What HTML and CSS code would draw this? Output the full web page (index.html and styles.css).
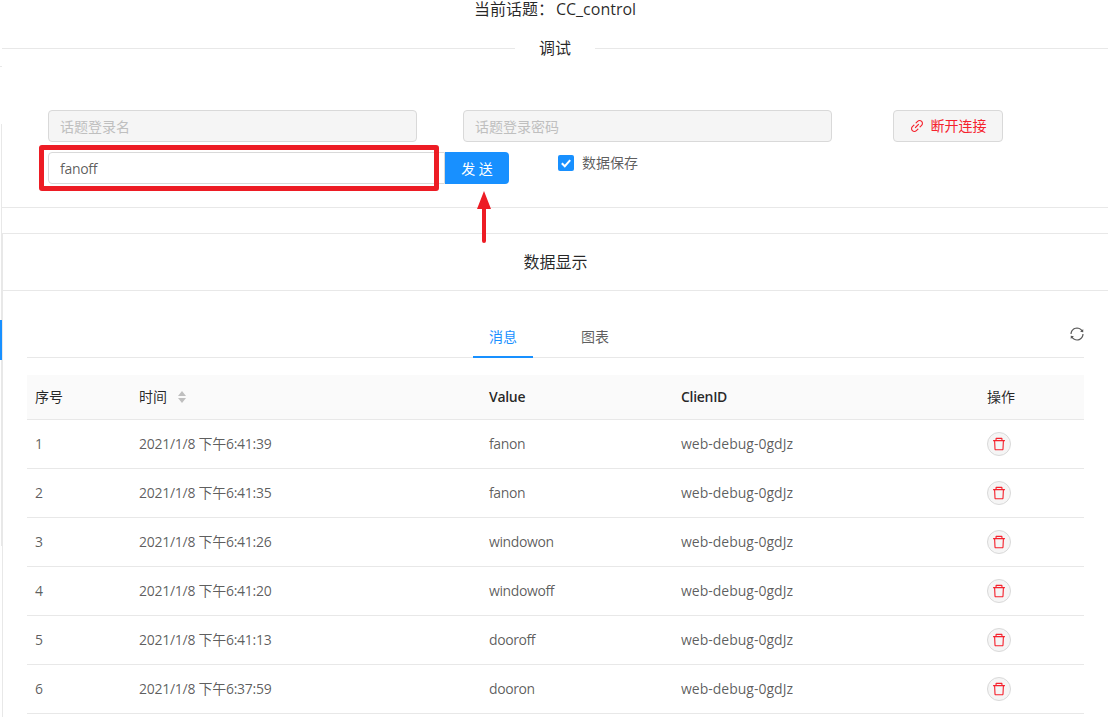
FILE: index.html
```html
<!DOCTYPE html>
<html>
<head>
    <meta charset="utf-8">
    <title>调试</title>
    <link rel="stylesheet" href="styles.css">
</head>
<body>
    <div class="page">
        <div class="rail">
            <div class="rail-tick"></div>
            <div class="rail-bar">
                <div class="rail-active"></div>
            </div>
            <div class="rail-rest"></div>
        </div>

        <div class="main">
            <div class="topic">当前话题：<span class="topic-name">CC_control</span></div>

            <div class="divider">
                <span class="divider-text">调试</span>
            </div>

            <form class="debug-form">
                <div class="form-row">
                    <input class="text-input login-input" type="text" placeholder="话题登录名" disabled>
                    <input class="text-input login-input" type="text" placeholder="话题登录密码" disabled>
                    <button class="disconnect-button" type="button">
                        <svg class="link-icon" viewBox="64 64 896 896" fill="currentColor"><path d="M574 665.4a8.03 8.03 0 0 0-11.3 0L446.5 781.6c-53.8 53.8-144.6 59.5-204 0-59.5-59.5-53.8-150.2 0-204l116.2-116.2c3.1-3.1 3.1-8.2 0-11.3l-39.8-39.8a8.03 8.03 0 0 0-11.3 0L191.4 526.5c-84.6 84.6-84.6 221.5 0 306s221.5 84.6 306 0l116.2-116.2c3.1-3.1 3.1-8.2 0-11.3L574 665.4zm258.6-474c-84.6-84.6-221.5-84.6-306 0L410.3 307.6a8.03 8.03 0 0 0 0 11.3l39.7 39.7c3.1 3.1 8.2 3.1 11.3 0l116.2-116.2c53.8-53.8 144.6-59.5 204 0 59.5 59.5 53.8 150.2 0 204L665.3 562.6a8.03 8.03 0 0 0 0 11.3l39.8 39.8c3.1 3.1 8.2 3.1 11.3 0l116.2-116.2c84.5-84.6 84.5-221.5 0-306.1zM610.1 372.3a8.03 8.03 0 0 0-11.3 0L372.3 598.7a8.03 8.03 0 0 0 0 11.3l39.6 39.6c3.1 3.1 8.2 3.1 11.3 0l226.4-226.4c3.1-3.1 3.1-8.2 0-11.3l-39.5-39.6z"/></svg>
                        断开连接
                    </button>
                </div>
                <div class="form-row send-row">
                    <input class="text-input send-input" type="text" value="fanoff">
                    <button class="send-button" type="button">发 送</button>
                    <label class="save-check">
                        <span class="check-box">
                            <svg viewBox="0 0 16 16"><path d="M3.8 8.2l3 3 5.4-6" fill="none" stroke="#fff" stroke-width="2"/></svg>
                        </span>
                        <span class="check-label">数据保存</span>
                    </label>

                    <!-- 截图上的红色标注 -->
                    <div class="mark-box"></div>
                    <svg class="mark-arrow" viewBox="0 0 14 52">
                        <path d="M7 0L14 18H9V50a2 2 0 0 1-4 0V18H0z" fill="#ed1c24"/>
                    </svg>
                </div>
            </form>

            <div class="card">
                <div class="card-head">数据显示</div>
                <div class="card-body">
                    <div class="tabs">
                        <div class="tab tab-active">消息</div>
                        <div class="tab">图表</div>
                        <svg class="reload-icon" viewBox="64 64 896 896" fill="currentColor"><path d="M168 504.2c1-43.7 10-86.1 26.9-126 17.3-41 42.1-77.7 73.7-109.4S337 212.3 378 195c42.4-17.9 87.4-27 133.9-27s91.5 9.1 133.8 27A341.5 341.5 0 0 1 755 268.8c9.9 9.9 19.2 20.4 27.8 31.4l-60.2 47a8 8 0 0 0 3 14.1l175.7 43c5 1.2 9.9-2.6 9.9-7.7l.8-180.9c0-6.7-7.7-10.5-12.9-6.3l-56.4 44.1C765.8 155.1 646.2 92 511.8 92 282.7 92 96.3 275.6 92 503.8a8 8 0 0 0 8 8.2h60c4.4 0 7.9-3.5 8-7.8zm756 7.8h-60c-4.4 0-7.9 3.5-8 7.8-1 43.7-10 86.1-26.9 126-17.3 41-42.1 77.8-73.7 109.4A342.45 342.45 0 0 1 512.1 856a342.24 342.24 0 0 1-243.2-100.8c-9.9-9.9-19.2-20.4-27.8-31.4l60.2-47a8 8 0 0 0-3-14.1l-175.7-43c-5-1.2-9.9 2.6-9.9 7.7l-.7 181c0 6.7 7.7 10.5 12.9 6.3l56.4-44.1C258.2 868.9 377.8 932 512.2 932c229.2 0 415.5-183.7 419.8-411.8a8 8 0 0 0-8-8.2z"/></svg>
                    </div>

                    <table class="msg-table">
                        <colgroup>
                            <col class="col-no">
                            <col class="col-time">
                            <col class="col-value">
                            <col class="col-client">
                            <col class="col-action">
                        </colgroup>
                        <thead>
                            <tr>
                                <th>序号</th>
                                <th>
                                    时间
                                    <svg class="sort-icon" viewBox="0 0 8 12"><path d="M4 0L8 5H0zM4 12L0 7H8z" fill="#bfbfbf"/></svg>
                                </th>
                                <th class="th-latin">Value</th>
                                <th class="th-latin">ClienID</th>
                                <th>操作</th>
                            </tr>
                        </thead>
                        <tbody id="msg-rows"></tbody>
                    </table>
                </div>
            </div>
        </div>
    </div>

    <script>
        const rows = [
            ['1', '2021/1/8 下午6:41:39', 'fanon'],
            ['2', '2021/1/8 下午6:41:35', 'fanon'],
            ['3', '2021/1/8 下午6:41:26', 'windowon'],
            ['4', '2021/1/8 下午6:41:20', 'windowoff'],
            ['5', '2021/1/8 下午6:41:13', 'dooroff'],
            ['6', '2021/1/8 下午6:37:59', 'dooron']
        ];
        const deleteIcon = '<svg viewBox="64 64 896 896" fill="currentColor"><path d="M360 184h-8c4.4 0 8-3.6 8-8v8h304v-8c0 4.4 3.6 8 8 8h-8v72h72v-80c0-35.3-28.7-64-64-64H352c-35.3 0-64 28.7-64 64v80h72v-72zm504 72H160c-17.7 0-32 14.3-32 32v32c0 4.4 3.6 8 8 8h60.4l24.7 523c1.6 34.1 29.8 61 63.9 61h454c34.2 0 62.3-26.8 63.9-61l24.7-523H888c4.4 0 8-3.6 8-8v-32c0-17.7-14.3-32-32-32zM731.3 840H292.7l-24.2-512h487l-24.2 512z"/></svg>';

        const tbody = document.getElementById('msg-rows');
        rows.forEach(r => {
            const tr = tbody.insertRow();
            r.concat('web-debug-0gdJz').forEach(text => {
                tr.insertCell().textContent = text;
            });
            tr.insertCell().innerHTML = '<button class="delete-button" type="button">' + deleteIcon + '</button>';
        });
    </script>
</body>
</html>
```

FILE: styles.css
```css
* {
    box-sizing: border-box;
}

html,
body {
    height: 100%;
    margin: 0;
    overflow: hidden;
}

body {
    font-family: "Open Sans", "Noto Sans CJK SC", sans-serif;
    font-size: 14px;
    color: rgba(0, 0, 0, 0.65);
    background: #fff;
}

.page {
    display: flex;
    height: 717px;
}

/* left edge of the cut-off menu */
.rail {
    flex: none;
    width: 2px;
    display: flex;
    flex-direction: column;
}

.rail-tick {
    height: 1px;
    margin-top: 66px;
    background: #e8e8e8;
}

.rail-bar {
    height: 422px;
    margin-top: 57px;
    padding-top: 196px;
    border-left: 1px solid #fff;
    background: #e8e8e8;
    background-clip: padding-box;
}

.rail-active {
    width: 2px;
    height: 40px;
    margin-left: -1px;
    background: #1890ff;
}

.rail-rest {
    flex: 1;
}

.main {
    flex: 1;
    min-width: 0;
}

.topic {
    height: 19px;
    line-height: 18px;
    font-size: 16px;
    text-align: center;
    color: rgba(0, 0, 0, 0.85);
}

.topic-name {
    margin-left: 2px;
}

.divider {
    display: flex;
    align-items: center;
    height: 22px;
    margin-top: 18px;
    font-size: 16px;
    color: rgba(0, 0, 0, 0.85);
}

.divider::before,
.divider::after {
    content: "";
    flex: 1;
    border-top: 1px solid #e8e8e8;
}

.divider-text {
    padding: 0 24px 2px;
}

.debug-form {
    height: 149px;
    padding: 51px 0 0 46px;
    border-bottom: 1px solid #e8e8e8;
}

.form-row {
    display: flex;
    align-items: flex-start;
}

.send-row {
    position: relative;
    margin-top: 10px;
}

.text-input {
    height: 32px;
    padding: 0 11px;
    font: inherit;
    color: rgba(0, 0, 0, 0.65);
    background: #fff;
    border: 1px solid #d9d9d9;
    border-radius: 4px;
    outline: none;
}

.text-input:disabled {
    background: #f5f5f5;
}

.text-input::placeholder {
    color: #bfbfbf;
    opacity: 1;
}

.login-input {
    width: 369px;
    margin-right: 46px;
}

.login-input + .login-input {
    margin-right: 61px;
}

.disconnect-button {
    display: flex;
    align-items: center;
    justify-content: center;
    width: 110px;
    height: 32px;
    padding: 0 0 2px;
    font: inherit;
    color: #f5222d;
    background: #f5f5f5;
    border: 1px solid #d9d9d9;
    border-radius: 4px;
}

.link-icon {
    width: 14px;
    height: 14px;
    margin: 2px 7px 0 0;
}

.send-input {
    width: 397px;
    letter-spacing: -0.3px;
    border-radius: 4px 0 0 4px;
}

.send-button {
    width: 64px;
    height: 32px;
    padding: 0;
    font: inherit;
    color: #fff;
    background: #1890ff;
    border: 0;
    border-radius: 0 4px 4px 0;
}

.save-check {
    display: flex;
    align-items: center;
    height: 16px;
    margin: 3px 0 0 49px;
}

.check-box {
    width: 16px;
    height: 16px;
    margin-right: 8px;
    background: #1890ff;
    border-radius: 2px;
}

.check-box svg {
    display: block;
}

.check-label {
    margin-top: -2px;
}

/* red annotations on top of the form */
.mark-box {
    position: absolute;
    left: -9px;
    top: -7px;
    width: 400px;
    height: 46px;
    border: 5px solid #ed1c24;
    border-radius: 3px;
}

.mark-arrow {
    position: absolute;
    left: 429px;
    top: 39px;
    width: 14px;
    height: 52px;
}

.card {
    height: 484px;
    margin-top: 25px;
    border-top: 1px solid #e8e8e8;
    border-left: 1px solid #e8e8e8;
}

.card-head {
    height: 57px;
    line-height: 56px;
    font-size: 16px;
    text-align: center;
    color: rgba(0, 0, 0, 0.85);
    border-bottom: 1px solid #e8e8e8;
}

.card-body {
    padding: 24px 24px 0;
}

.tabs {
    position: relative;
    display: flex;
    justify-content: center;
    gap: 32px;
    height: 43px;
    padding-right: 13px;
    border-bottom: 1px solid #e8e8e8;
}

.tab {
    width: 60px;
    height: 43px;
    line-height: 44px;
    text-align: center;
}

.tab-active {
    color: #1890ff;
    border-bottom: 2px solid #1890ff;
}

.reload-icon {
    position: absolute;
    right: 0;
    top: 12px;
    width: 14px;
    height: 14px;
    color: #595959;
}

.msg-table {
    width: 100%;
    margin-top: 17px;
    table-layout: fixed;
    border-collapse: separate;
    border-spacing: 0;
}

.col-no {
    width: 104px;
}

.col-time {
    width: 350px;
}

.col-value {
    width: 192px;
}

.col-client {
    width: 306px;
}

.col-action {
    width: 105px;
}

.msg-table th,
.msg-table td {
    padding: 0 8px;
    text-align: left;
    border-bottom: 1px solid #e8e8e8;
}

.msg-table th {
    height: 45px;
    padding-bottom: 2px;
    font-weight: 400;
    color: rgba(0, 0, 0, 0.85);
    background: #fafafa;
}

.msg-table .th-latin {
    font-weight: 600;
    letter-spacing: -0.3px;
}

.msg-table td {
    height: 49px;
}

.msg-table td:not(:last-child) {
    padding-bottom: 2px;
}

.msg-table td:nth-child(2) {
    letter-spacing: -0.27px;
}

.msg-table td:nth-child(3) {
    letter-spacing: -0.4px;
}

.sort-icon {
    width: 8px;
    height: 12px;
    margin-left: 7px;
    vertical-align: -1px;
}

.delete-button {
    display: flex;
    align-items: center;
    justify-content: center;
    width: 24px;
    height: 24px;
    padding: 0;
    color: #f5222d;
    background: #f5f5f5;
    border: 1px solid #d9d9d9;
    border-radius: 50%;
}

.delete-button svg {
    width: 14px;
    height: 14px;
}
```
